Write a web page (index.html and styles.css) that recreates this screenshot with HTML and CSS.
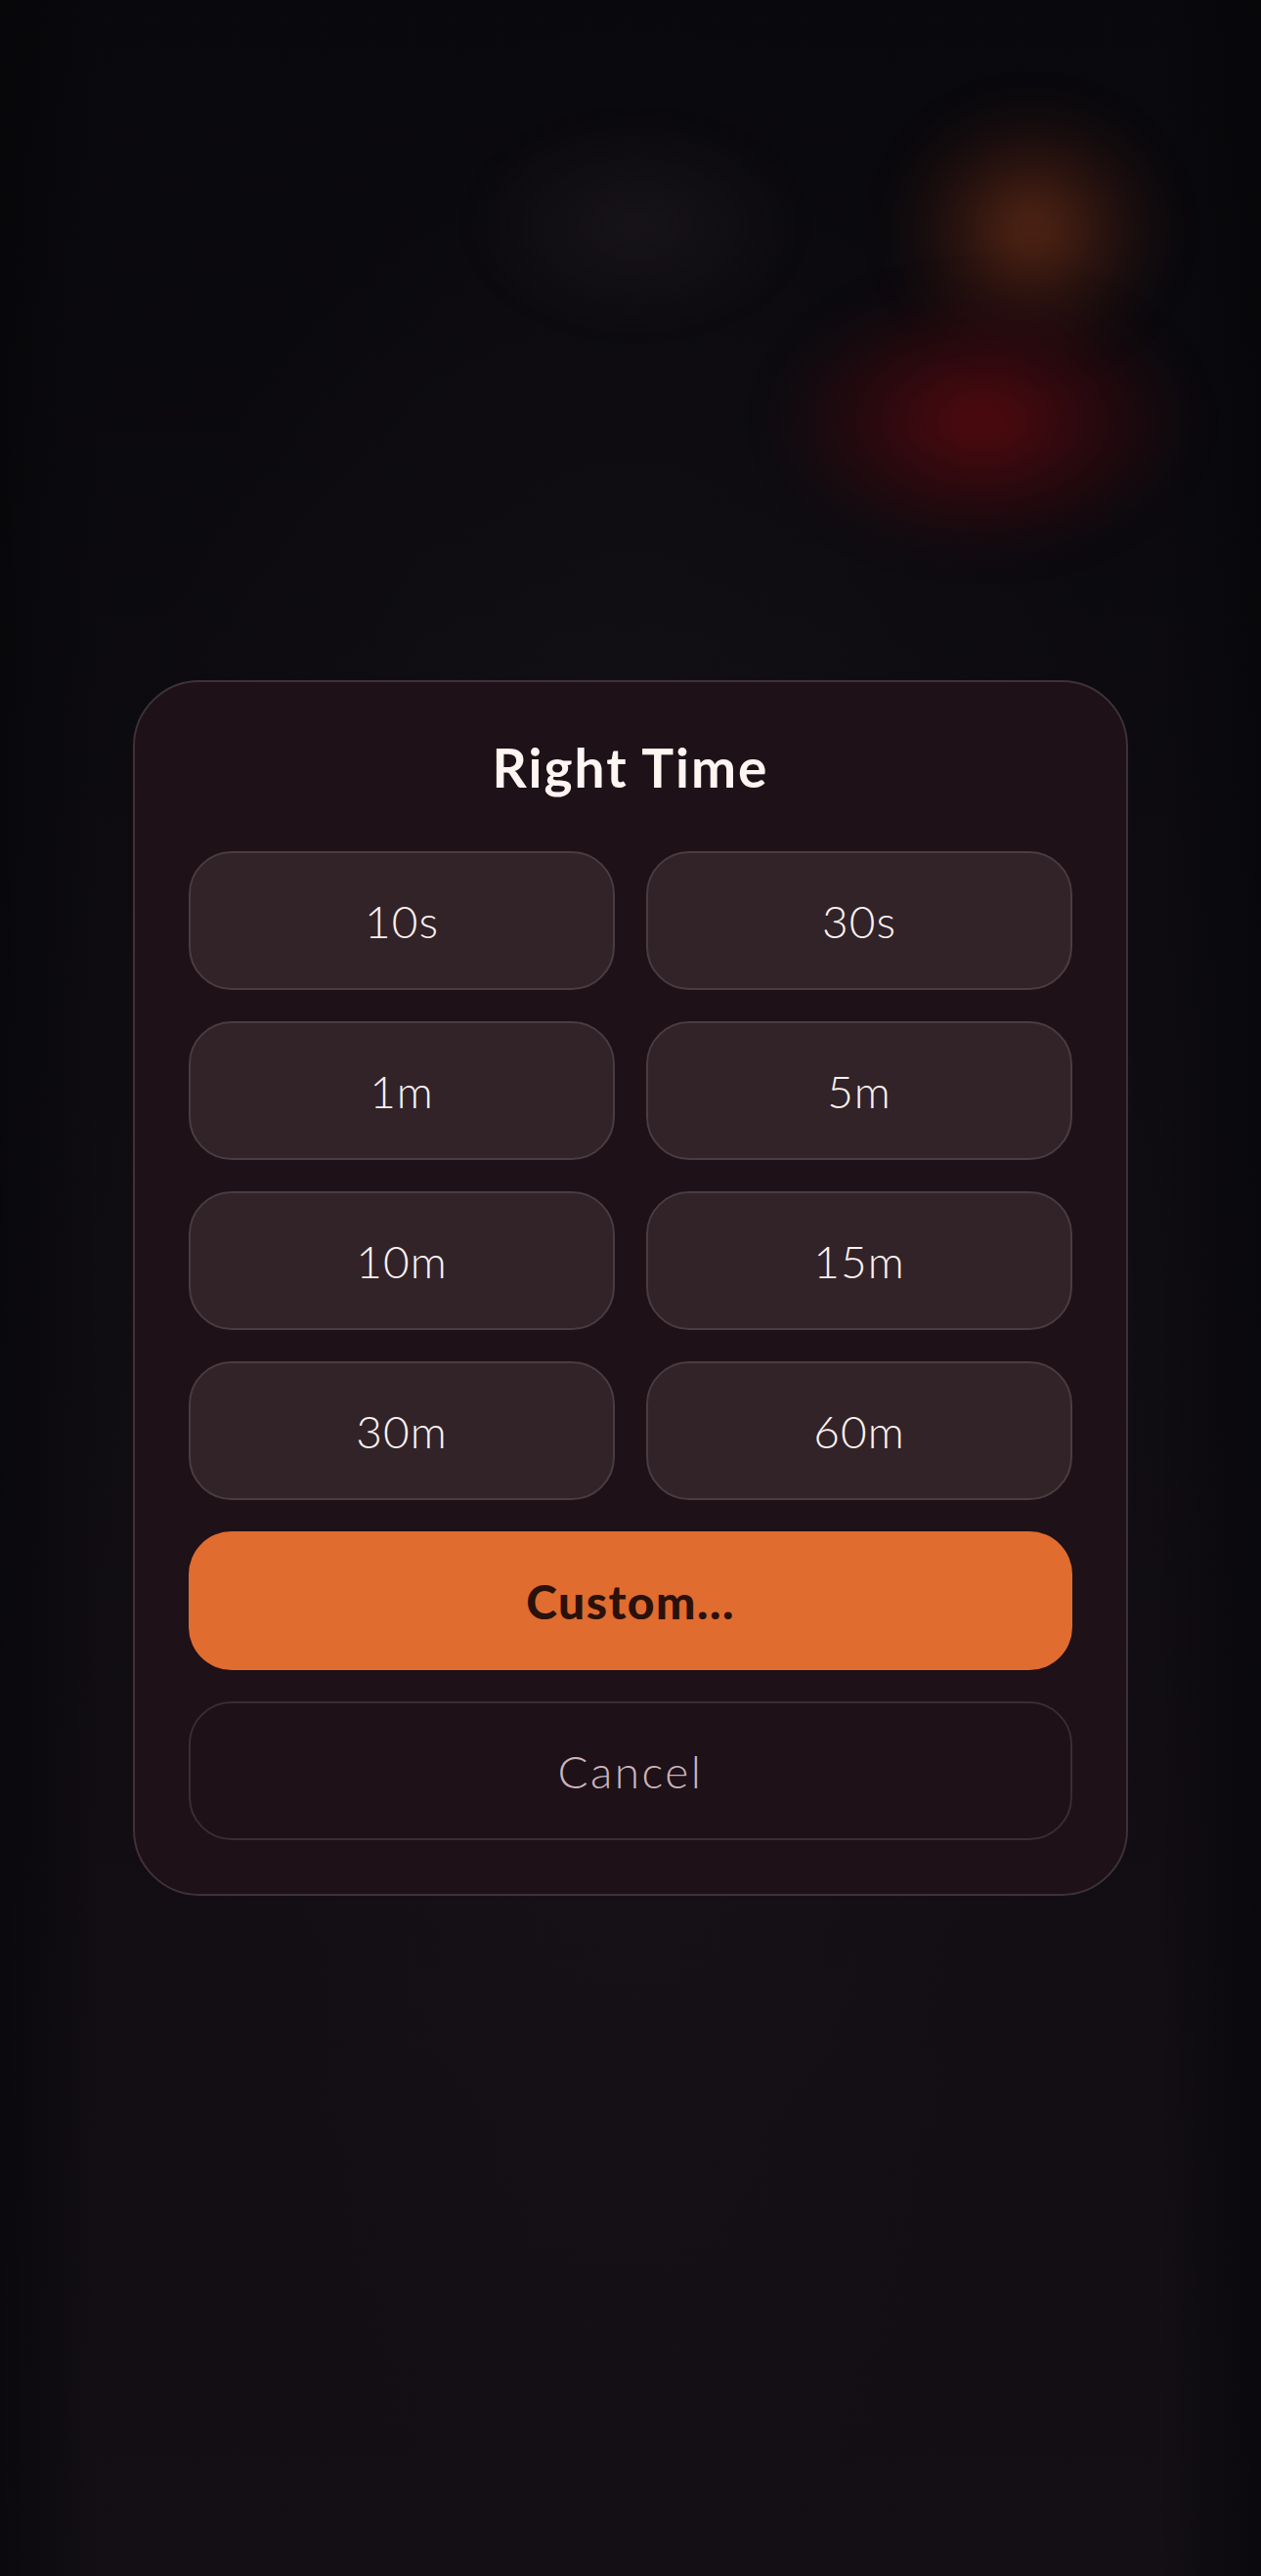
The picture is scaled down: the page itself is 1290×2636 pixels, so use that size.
FILE: index.html
```html
<!DOCTYPE html>
<html lang="en">
<head>
<meta charset="utf-8">
<title>Right Time</title>
<link rel="stylesheet" href="styles.css">
</head>
<body>
<div class="screen">
  <div class="glow glow-orange"></div>
  <div class="glow glow-red"></div>
  <div class="glow glow-grey"></div>
  <div class="modal">
    <h1 class="title">Right Time</h1>
    <div class="grid">
      <button class="opt">10s</button>
      <button class="opt">30s</button>
      <button class="opt">1m</button>
      <button class="opt">5m</button>
      <button class="opt">10m</button>
      <button class="opt">15m</button>
      <button class="opt">30m</button>
      <button class="opt">60m</button>
    </div>
    <button class="custom">Custom...</button>
    <button class="cancel">Cancel</button>
  </div>
</div>
</body>
</html>
```

FILE: styles.css
```css
html, body {
  margin: 0;
  padding: 0;
}
body {
  background: #0b0a0e;
  font-family: Lato, "Open Sans", "Noto Sans", sans-serif;
}
.screen {
  position: relative;
  height: 2636px;
  overflow: hidden;
  display: flex;
  align-items: center;
  justify-content: center;
  background:
    linear-gradient(90deg, rgba(5, 5, 8, 0.6) 0%, rgba(5, 5, 8, 0) 8%, rgba(5, 5, 8, 0) 92%, rgba(5, 5, 8, 0.6) 100%),
    radial-gradient(ellipse 560px 1300px at 645px 1320px, rgba(30, 24, 30, 0.55), rgba(30, 24, 30, 0) 100%),
    linear-gradient(180deg, #09080c 0%, #0e0c11 40%, #110d13 70%, #130f15 100%);
}
.glow {
  position: absolute;
  border-radius: 50%;
  pointer-events: none;
}
.glow-orange {
  left: 910px;
  top: 100px;
  width: 290px;
  height: 270px;
  background: radial-gradient(closest-side, rgba(105, 46, 22, 0.8), rgba(80, 30, 18, 0.35) 60%, rgba(60, 20, 15, 0) 100%);
  filter: blur(18px);
}
.glow-red {
  left: 790px;
  top: 290px;
  width: 430px;
  height: 280px;
  background: radial-gradient(closest-side, rgba(95, 10, 14, 0.85), rgba(65, 8, 14, 0.45) 60%, rgba(40, 8, 14, 0) 100%);
  filter: blur(18px);
}
.glow-grey {
  left: 480px;
  top: 120px;
  width: 340px;
  height: 220px;
  background: radial-gradient(closest-side, rgba(38, 32, 38, 0.45), rgba(38, 32, 38, 0) 100%);
  filter: blur(10px);
}
.modal {
  position: relative;
  box-sizing: border-box;
  width: 1018px;
  padding: 54px 55px 55px;
  background: #1e1117;
  border: 2px solid #3e3237;
  border-radius: 68px;
  display: flex;
  flex-direction: column;
}
.title {
  margin: 0 0 53px;
  text-align: center;
  color: #fff5f1;
  font-size: 55px;
  line-height: 1.2;
  font-weight: 700;
  letter-spacing: 2px;
}
.grid {
  display: grid;
  grid-template-columns: 1fr 1fr;
  gap: 32px;
}
button {
  font-family: inherit;
  margin: 0;
  box-sizing: border-box;
  height: 142px;
  border-radius: 44px;
  cursor: pointer;
}
.opt {
  background: #322328;
  border: 2px solid #4a3c40;
  color: #fbf1ef;
  font-size: 46px;
  font-weight: 300;
  letter-spacing: 1px;
}
.custom {
  margin-top: 32px;
  background: #e06c30;
  border: none;
  color: #2a110a;
  font-size: 48px;
  font-weight: 900;
  letter-spacing: 1.5px;
}
.cancel {
  margin-top: 32px;
  background: transparent;
  border: 2px solid #3b2d32;
  color: #cbb4be;
  font-size: 46px;
  font-weight: 300;
  letter-spacing: 2.5px;
}
```
